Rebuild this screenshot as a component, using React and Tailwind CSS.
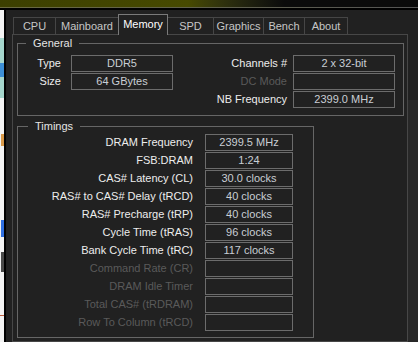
const FONT = "font-['Liberation_Sans',Arial,sans-serif]"

const TABS = [
  { label: 'CPU', w: 'w-[42px]' },
  { label: 'Mainboard', w: 'w-[63px]' },
  { label: 'Memory', w: 'w-[50px]', active: true },
  { label: 'SPD', w: 'w-[46px]' },
  { label: 'Graphics', w: 'w-[50px]' },
  { label: 'Bench', w: 'w-[41px]' },
  { label: 'About', w: 'w-[44px]', last: true },
]

const TIMINGS = [
  ['DRAM Frequency', '2399.5 MHz'],
  ['FSB:DRAM', '1:24'],
  ['CAS# Latency (CL)', '30.0 clocks'],
  ['RAS# to CAS# Delay (tRCD)', '40 clocks'],
  ['RAS# Precharge (tRP)', '40 clocks'],
  ['Cycle Time (tRAS)', '96 clocks'],
  ['Bank Cycle Time (tRC)', '117 clocks'],
  ['Command Rate (CR)', '', true],
  ['DRAM Idle Timer', '', true],
  ['Total CAS# (tRDRAM)', '', true],
  ['Row To Column (tRCD)', '', true],
]

function Field({ value }) {
  return (
    <div className="h-[17px] border border-[#6c6c6c] flex items-center justify-center text-[#c9ced4] whitespace-nowrap">
      {value}
    </div>
  )
}

function Label({ children, disabled }) {
  return (
    <div className={`h-[17px] flex items-center justify-end whitespace-nowrap ${disabled ? 'text-[#5a5a5a]' : 'text-[#ededed]'}`}>
      {children}
    </div>
  )
}

function DesktopEdge() {
  // bits of the desktop peeking out left of the window
  return (
    <div className="w-[4px] shrink-0 bg-[#f3f3f3] flex flex-col">
      <div className="h-[28px] shrink-0" />
      <div className="h-[25px] shrink-0 bg-[#a5d6cc]" />
      <div className="h-[14px] shrink-0 bg-[#3d8fd6]" />
      <div className="h-[21px] shrink-0 bg-[#a5d6cc]" />
      <div className="h-[36px] shrink-0" />
      <div className="h-[12px] shrink-0 w-[3px] ml-px bg-[#d99a4a]" />
      <div className="h-[74px] shrink-0" />
      <div className="h-[17px] shrink-0 w-[3px] ml-px bg-[#2f6fe0]" />
      <div className="h-[15px] shrink-0" />
      <div className="h-[20px] shrink-0 w-[3px] ml-px bg-[#4a4a4a]" />
      <div className="h-[43px] shrink-0" />
      <div className="h-px shrink-0 bg-[#c06040]" />
    </div>
  )
}

export default function App() {
  return (
    <div className={`w-[418px] h-[342px] overflow-hidden flex flex-col bg-[#f3f3f3] ${FONT} text-[11px] leading-[13px]`}>
      <div className="h-[7px] shrink-0 bg-linear-to-r from-[#3c3f00] via-[#474a00] via-45% to-[#0b0b0b] to-68%" />
      <div className="h-px shrink-0 bg-linear-to-r from-[#6a6a40] to-[#555555]" />
      <div className="h-[2px] shrink-0 bg-black" />

      <div className="flex flex-1 min-h-0">
        <DesktopEdge />

        <div className="flex-1 flex flex-col bg-[#212121] border-l-2 border-black">
          <div className="mt-[4px] ml-[7px] h-[20px] flex items-end shrink-0">
            {TABS.map((t) =>
              t.active ? (
                <div
                  key={t.label}
                  className={`${t.w} h-[21px] -mb-px -mr-px relative z-10 bg-[#212121] border border-b-0 border-[#7a7a7a] flex items-center justify-center pb-[2px] text-white`}
                >
                  {t.label}
                </div>
              ) : (
                <div
                  key={t.label}
                  className={`${t.w} h-[17px] border-t border-l ${t.last ? 'border-r' : ''} border-[#464646] flex items-center justify-center text-[#c6c6c6]`}
                >
                  {t.label}
                </div>
              )
            )}
          </div>

          <div className="flex flex-1 min-h-0">
            <div className="ml-[6px] w-[396px] shrink-0 border border-[#474747] pl-[4px] pr-[3px]">
              <fieldset className="mt-[2px] w-[387px] border border-[#666666] pb-[7px]">
                <legend className="ml-[8px] px-[7px] text-[#e4e4e4] leading-[13px]">General</legend>
                <div className="pt-[5px] pr-[8px] flex justify-between items-start">
                  <div className="grid grid-cols-[43px_102px] gap-x-[10px] gap-y-px">
                    <Label>Type</Label>
                    <Field value="DDR5" />
                    <Label>Size</Label>
                    <Field value="64 GBytes" />
                  </div>
                  <div className="grid grid-cols-[auto_102px] gap-x-[6px] gap-y-px">
                    <Label>Channels #</Label>
                    <Field value="2 x 32-bit" />
                    <Label disabled>DC Mode</Label>
                    <Field value="" />
                    <Label>NB Frequency</Label>
                    <Field value="2399.0 MHz" />
                  </div>
                </div>
              </fieldset>

              <fieldset className="mt-[4px] w-[297px] border border-[#666666] pb-[6px]">
                <legend className="ml-[10px] px-[7px] text-[#e4e4e4] leading-[13px]">Timings</legend>
                <div className="pt-px grid grid-cols-[175px_88px] gap-x-[12px] gap-y-px">
                  {TIMINGS.map(([label, value, disabled]) => (
                    <div key={label} className="contents">
                      <Label disabled={disabled}>{label}</Label>
                      <Field value={value} />
                    </div>
                  ))}
                </div>
              </fieldset>
            </div>

            <div className="flex-1 flex flex-col">
              <div className="h-[66px] shrink-0" />
              <div className="flex-1 bg-[#282828]" />
            </div>
          </div>
        </div>
      </div>
    </div>
  )
}
